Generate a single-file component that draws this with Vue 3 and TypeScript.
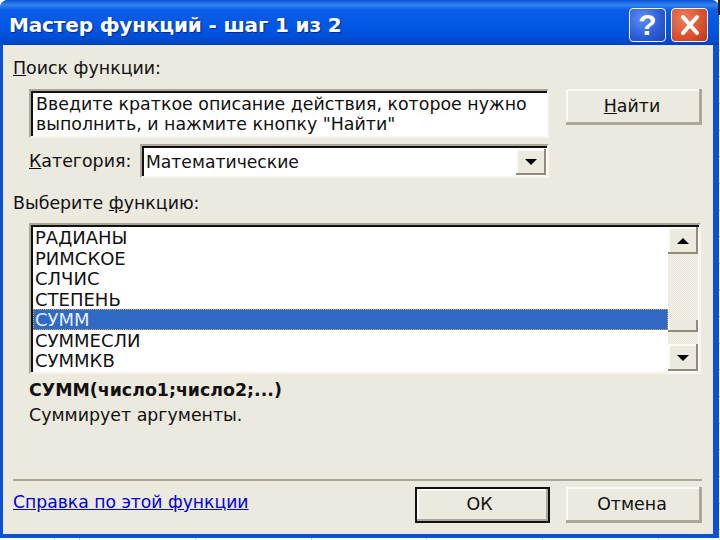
<script setup lang="ts">
const rows: string[] = ['РАДИАНЫ', 'РИМСКОЕ', 'СЛЧИС', 'СТЕПЕНЬ', 'СУММ', 'СУММЕСЛИ', 'СУММКВ']
const selected = 'СУММ'
</script>

<template>
  <div class="page">
    <div class="dialog">
      <header class="titlebar">
        <span class="title">Мастер функций - шаг 1 из 2</span>
        <div class="caption-buttons">
          <span class="cap help">?</span>
          <span class="cap close">
            <svg width="24" height="22" viewBox="0 0 24 22">
              <path d="M5 3 L19 19 M19 3 L5 19" stroke="#fff" stroke-width="4" stroke-linecap="round" fill="none" />
            </svg>
          </span>
        </div>
      </header>
      <main class="client">
        <div class="label"><u>П</u>оиск функции:</div>
        <div class="search-row">
          <div class="desc sunken">Введите краткое описание действия, которое нужно<br />выполнить, и нажмите кнопку "Найти"</div>
          <div class="btn find"><span><u>Н</u>айти</span></div>
        </div>
        <div class="cat-row">
          <span class="cat-label"><u>К</u>атегория:</span>
          <div class="combo sunken">
            <span class="combo-value">Математические</span>
            <span class="sb-btn combo-arrow"><i class="arrow down"></i></span>
          </div>
        </div>
        <div class="label pick">Выберите <u>ф</u>ункцию:</div>
        <div class="list sunken">
          <ul class="items">
            <li v-for="r in rows" :key="r" :class="{ sel: r === selected }">{{ r }}</li>
          </ul>
          <div class="scrollbar">
            <span class="sb-btn up"><i class="arrow upward"></i></span>
            <div class="track"><span class="thumb"></span></div>
            <span class="sb-btn dn"><i class="arrow down"></i></span>
          </div>
        </div>
        <div class="sig">СУММ(число1;число2;...)</div>
        <div class="sum">Суммирует аргументы.</div>
        <div class="sep"></div>
        <footer class="footer">
          <a class="link">Справка по этой функции</a>
          <div class="btn ok"><span>ОК</span></div>
          <div class="btn cancel"><span>Отмена</span></div>
        </footer>
      </main>
    </div>
    <span class="speck"></span>
  </div>
</template>

<style>
html, body { margin: 0; background: #fff; }
</style>

<style scoped>
.page {
  position: relative;
  width: 720px;
  height: 540px;
  overflow: hidden;
  background-color: #fff;
  background-image:
    repeating-linear-gradient(90deg, #c8c8c8 0 1px, transparent 1px 115.8px),
    repeating-linear-gradient(180deg, #c8c8c8 0 1px, transparent 1px 26.65px);
  background-position: 79px 0, 0 23px;
  font-family: "DejaVu Sans", sans-serif;
  font-size: 17.4px;
  color: #111;
}
.speck {
  position: absolute;
  right: 0;
  top: 0;
  width: 2px;
  height: 15px;
  background: #222;
}
.dialog {
  width: 719px;
  height: 538px;
  display: flex;
  flex-direction: column;
  background: #0a50d8;
  border-radius: 8px 8px 0 0;
  overflow: hidden;
  box-sizing: border-box;
  padding: 0 6px 4px 3px;
}
.titlebar {
  height: 45px;
  margin: 0 -6px 0 -3px;
  flex: none;
  display: flex;
  align-items: center;
  justify-content: space-between;
  background: linear-gradient(180deg, #0a50d8 0, #2f86f0 5px, #0b5de6 10px, #0055e5 30px, #0049cc 42px, #0040b8 45px);
  padding: 4px 11px 0 9px;
  box-sizing: border-box;
}
.title {
  font-weight: 700;
  font-size: 20px;
  letter-spacing: -0.15px;
  color: #fff;
  text-shadow: 1px 1px 1px #0a2a80;
  white-space: nowrap;
}
.caption-buttons { display: flex; gap: 5px; }
.cap {
  width: 35px;
  height: 32px;
  border: 1px solid #f2f6ff;
  border-radius: 4px;
  display: flex;
  align-items: center;
  justify-content: center;
  color: #fff;
  font-family: "Liberation Sans", sans-serif;
  font-weight: 700;
  font-size: 30px;
  line-height: 1;
}
.help { background: radial-gradient(circle at 35% 30%, #5f8ff0, #2a5bd8 60%, #1c44b8); }
.close { background: radial-gradient(circle at 35% 30%, #e8815e, #d9502c 60%, #b83414); }
.client {
  flex: 1;
  background: #ece9df;
  padding: 13px 11px 0 10px;
  display: flex;
  flex-direction: column;
}
.label { height: 20px; line-height: 20px; white-space: nowrap; }
.sunken {
  box-sizing: border-box;
  background: #fff;
  border: 2px solid;
  border-color: #aca899 #f7f5ee #f7f5ee #aca899;
  box-shadow: inset 2px 2px 0 #111;
}
.search-row {
  margin: 11px 0 0 16px;
  display: flex;
  gap: 17px;
  align-items: flex-start;
}
.desc {
  width: 520px;
  height: 49px;
  padding: 3px 0 0 5px;
  line-height: 20px;
  white-space: nowrap;
  overflow: hidden;
}
.btn {
  box-sizing: border-box;
  display: flex;
  align-items: center;
  justify-content: center;
  padding: 0 4px 3px 0;
  background: #ece9df;
  box-shadow: inset -3px -3px 0 #aca899, inset 2px 2px 0 #fbfaf5;
}
.find { width: 136px; height: 36px; }
.cat-row {
  margin: 6px 0 0 16px;
  width: 520px;
  display: flex;
  align-items: center;
  justify-content: space-between;
}
.combo {
  width: 409px;
  height: 34px;
  display: flex;
  align-items: center;
  justify-content: space-between;
  padding: 1px 1px 0 4px;
  font-size: 17.2px;
}
.sb-btn {
  box-sizing: border-box;
  width: 30px;
  display: flex;
  align-items: center;
  justify-content: center;
  background: #ece9df;
  flex: none;
  box-shadow: inset -2px -2px 0 #8f8b78, inset 2px 2px 0 #fbfaf5;
}
.combo-arrow { height: 26px; }
.arrow { width: 0; height: 0; border-left: 6px solid transparent; border-right: 6px solid transparent; }
.arrow.down { border-top: 6px solid #000; }
.arrow.upward { border-bottom: 6px solid #000; }
.pick { margin-top: 15px; }
.list {
  margin: 10px 0 0 16px;
  width: 672px;
  height: 151px;
  display: flex;
  padding: 2px 1px 1px 2px;
}
.items {
  flex: 1;
  margin: 0;
  padding: 0;
  list-style: none;
  overflow: hidden;
  font-size: 18px;
}
.items li {
  box-sizing: border-box;
  height: 20.5px;
  line-height: 20px;
  padding: 1px 0 0 2px;
}
.items li.sel {
  background: #316ac5;
  color: #e8eefc;
  outline: 1px dotted #c9a860;
  outline-offset: -1px;
}
.scrollbar {
  width: 30px;
  display: flex;
  flex-direction: column;
}
.sb-btn.up, .sb-btn.dn { height: 27px; }
.track {
  flex: 1;
  background: repeating-conic-gradient(#f6f4ec 0 25%, #e8e5d6 0 50%) 0 0 / 2px 2px;
}
.thumb {
  display: block;
  height: 12px;
  margin-top: 66px;
  background: #ece9df;
  box-shadow: inset -2px -2px 0 #8f8b78, inset 2px 0 0 #fbfaf5;
}
.sig {
  margin: 6px 0 0 16px;
  height: 20px;
  line-height: 20px;
  font-weight: 700;
}
.sum {
  margin: 5px 0 0 16px;
  height: 20px;
  line-height: 20px;
}
.sep {
  margin-top: 54px;
  height: 2px;
  background: #aca899;
}
.footer {
  margin-top: 6px;
  display: flex;
  align-items: flex-start;
}
.link {
  flex: 1;
  margin-top: 5px;
  font-size: 17.2px;
  color: #0000e0;
  text-decoration: underline;
  line-height: 20px;
  white-space: nowrap;
}
.ok {
  width: 135px;
  height: 36px;
  padding-right: 6px;
  border: 2px solid #111;
  box-shadow: inset -2px -2px 0 #aca899, inset 2px 2px 0 #fbfaf5;
}
.cancel { width: 136px; height: 36px; margin-left: 16px; }
</style>
